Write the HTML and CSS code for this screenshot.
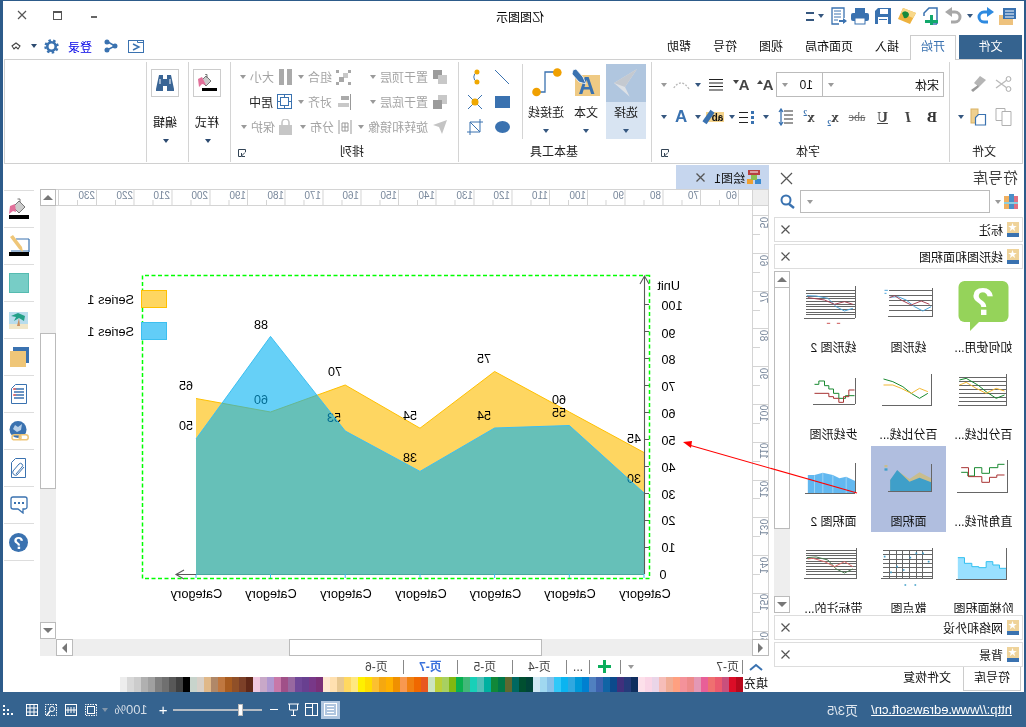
FILE: index.html
```html
<!DOCTYPE html>
<html lang="zh">
<head>
<meta charset="utf-8">
<title>亿图图示</title>
<link rel="stylesheet" href="styles.css">
</head>
<body>
<div class="app">
  <header class="titlebar">
    <div class="qa">
      <svg width="20" height="20" viewBox="0 0 20 20"><rect x="4" y="9" width="14" height="10" fill="#eec27d"/><rect x="1" y="2" width="13" height="11" fill="#3a72b0"/><path d="M3 5h9M3 8h9M3 11h9" stroke="#fff"/></svg>
      <svg width="20" height="20" viewBox="0 0 20 20"><path d="M8 6h4a5 5 0 0 1 0 10H8" fill="none" stroke="#2e8ae0" stroke-width="3"/><path d="M2 6l7-5v10z" fill="#2e8ae0"/></svg>
      <i class="dd"></i>
      <svg width="20" height="20" viewBox="0 0 20 20"><g transform="translate(20,0) scale(-1,1)"><path d="M8 6h4a5 5 0 0 1 0 10H8" fill="none" stroke="#a8a8a8" stroke-width="3"/><path d="M2 6l7-5v10z" fill="#a8a8a8"/></g></svg>
      <svg width="20" height="20" viewBox="0 0 20 20"><path d="M3 18V2h8l5 5v3" fill="none" stroke="#3a72b0" stroke-width="1.500"/><path d="M3 18h5" stroke="#3a72b0" stroke-width="1.500"/><path d="M5 15h5v-5h3v5h5v3h-5v2h-3v-2H5z" fill="#12a86c" transform="translate(-3,-1)"/></svg>
      <svg width="20" height="20" viewBox="0 0 20 20"><path d="M1 7l13-5 5 11-12 5z" fill="#eeb23e"/><path d="M1 7l13-5 2 5-12 5z" fill="#f8d88a"/><path d="M8 8a4 4 0 0 1 7-1l-2 5a4 4 0 0 1-5-4z" fill="#178a3c"/></svg>
      <svg width="20" height="20" viewBox="0 0 20 20"><path d="M2 2h13l3 3v13H2z" fill="#3a72b0"/><rect x="5" y="3" width="8" height="5" fill="#fff"/><rect x="5" y="11" width="10" height="7" fill="#fff"/><rect x="6" y="13" width="8" height="1" fill="#3a72b0"/></svg>
      <svg width="20" height="20" viewBox="0 0 20 20"><rect x="1" y="7" width="18" height="8" rx="2" fill="#3a72b0"/><rect x="5" y="2" width="10" height="5" fill="#3a72b0"/><rect x="5" y="12" width="10" height="6" fill="#fff" stroke="#3a72b0"/></svg>
      <svg width="20" height="20" viewBox="0 0 20 20"><path d="M4 12V2h12v16H9" fill="none" stroke="#3a72b0" stroke-width="1.300"/><path d="M7 5h7M7 8h7M7 11h7M10 14h4" stroke="#3a72b0"/><path d="M1 15l4-3v2h4v2H5v2z" fill="#3a72b0"/></svg>
      <i class="dd"></i>
      <span class="qa-more"></span>
    </div>
    <div class="apptitle">亿图图示</div>
    <div class="win">
      <span class="win-min"></span>
      <span class="win-max"></span>
      <svg width="10" height="10" viewBox="0 0 10 10"><path d="M1 1l8 8M9 1l-8 8" stroke="#555" stroke-width="1.200"/></svg>
    </div>
  </header>

  <nav class="tabsrow">
    <div class="tab tab-file">文件</div>
    <div class="tab tab-active">开始</div>
    <div class="tab">插入</div>
    <div class="tab">页面布局</div>
    <div class="tab">视图</div>
    <div class="tab">符号</div>
    <div class="tab">帮助</div>
    <div class="account">
      <svg width="16" height="14" viewBox="0 0 16 14"><rect x=".5" y="1.500" width="15" height="12" fill="#fff" stroke="#3a72b0"/><path d="M.5 1.500h6v2h-6" fill="none" stroke="#3a72b0"/><path d="M11 5l-6 3 6 3" fill="none" stroke="#3a72b0" stroke-width="1.400"/></svg>
      <svg width="14" height="14" viewBox="0 0 14 14"><path d="M10 3L3 7l8 4" fill="none" stroke="#3a72b0" stroke-width="1.500"/><circle cx="11" cy="3" r="2.500" fill="#3a72b0"/><circle cx="3" cy="7" r="2.500" fill="#3a72b0"/><circle cx="11" cy="11" r="2.500" fill="#3a72b0"/></svg>
      <span class="login">登录</span>
      <svg width="15" height="15" viewBox="0 0 15 15"><circle cx="7.500" cy="7.500" r="4.200" fill="none" stroke="#3a72b0" stroke-width="2.600"/><circle cx="7.500" cy="7.500" r="6" fill="none" stroke="#3a72b0" stroke-width="2.400" stroke-dasharray="2.400 2.300"/></svg>
      <i class="dd dd-dark"></i>
      <svg width="10" height="8" viewBox="0 0 10 8"><path d="M1 4l4-3 4 3-2 3-2-2-2 2z" fill="none" stroke="#444" stroke-width="1.100"/></svg>
    </div>
  </nav>

  <section class="ribbon">
    <div class="group g-file">
      <div class="rows">
        <div class="gr gr-file">
          <svg width="18" height="18" viewBox="0 0 18 18"><circle cx="3.500" cy="4" r="2.400" fill="none" stroke="#aaa"/><circle cx="3.500" cy="14" r="2.400" fill="none" stroke="#aaa"/><path d="M5 5l11 8M5 13l11-8" stroke="#bbb" stroke-width="1.400"/></svg>
          <svg width="18" height="18" viewBox="0 0 18 18"><path d="M1 5l6-4 6 7-5 4z" fill="#b5b5b5"/><path d="M9 10l7 5-2 2-6-5z" fill="#999"/></svg>
          <span></span>
        </div>
        <div class="gr gr-file">
          <svg width="18" height="18" viewBox="0 0 18 18"><path d="M1 3.500h9v14H1zM7 3.500V.5h9v12h-6" fill="none" stroke="#b0b0b0"/></svg>
          <svg width="18" height="18" viewBox="0 0 18 18"><rect x="9" y="1" width="7" height="14" fill="#efd08f" stroke="#d9b264"/><path d="M1.500 6.500h7l3 3v7.500H1.500z" fill="#fff" stroke="#3a72b0" stroke-width="1.200"/></svg>
          <i class="dd"></i>
        </div>
      </div>
      <div class="glabel ml-file">文件</div>
    </div>

    <div class="group g-font">
      <div class="rows">
        <div class="gr gr-font1">
          <div class="combo combo-font"><span>宋体</span><i class="dd dd-grey"></i></div>
          <div class="combo combo-size"><span>10</span><i class="dd dd-grey"></i></div>
          <span class="fa">A<sup class="fa-up"></sup></span>
          <span class="fa">A<sup class="fa-down"></sup></span>
          <svg width="16" height="14" viewBox="0 0 16 14"><path d="M1 1.500h14M1 5h14M1 8.500h14M1 12h14" stroke="#222" stroke-width="1.200"/></svg>
          <i class="dd"></i>
          <svg width="18" height="12" viewBox="0 0 18 12"><path d="M1 10q8-12 16 0" fill="none" stroke="#b8b8b8" stroke-width="1.300" stroke-dasharray="2 1.500"/></svg>
          <i class="dd dd-grey"></i>
        </div>
        <div class="gr gr-font2">
          <b class="fs fs-b">B</b>
          <b class="fs fs-i">I</b>
          <b class="fs fs-u">U</b>
          <span class="fs fs-abc">abc</span>
          <b class="fs">x<sub>2</sub></b>
          <b class="fs">x<sup>2</sup></b>
          <svg width="16" height="18" viewBox="0 0 16 18"><path d="M1 3h9M1 7h9M1 11h9M1 15h9" stroke="#333"/><path d="M13 1v16M11 4l2-3 2 3M11 14l2 3 2-3" fill="none" stroke="#3a72b0" stroke-width="1.300"/></svg>
          <i class="dd"></i>
          <svg width="15" height="14" viewBox="0 0 15 14"><path d="M0 1h3v3H0zM0 6h3v3H0zM0 11h3v3H0z" fill="#3a72b0"/><path d="M6 2.500h9M6 7.500h9M6 12.500h9" stroke="#222"/></svg>
          <i class="dd"></i>
          <span class="hl">ab<span class="hl-pen"></span></span>
          <i class="dd"></i>
          <b class="fs fs-color">A</b>
          <i class="dd"></i>
        </div>
      </div>
      <div class="glabel-row"><div class="glabel ml-font">字体</div><svg class="launcher" width="8" height="8" viewBox="0 0 8 8"><path d="M.5 3V.5h7v7H5M1 3.500l3.500 3.500M1 7.500h3.500V4" fill="none" stroke="#345"/></svg></div>
    </div>

    <div class="group g-tools">
      <div class="tools">
        <div class="big big-sel">
          <div class="big-top"><svg width="40" height="38" viewBox="0 0 40 38"><path d="M9 5l23 14-15.700 13.700L21 23z" fill="#dde1e6"/><path d="M9 5l12 18 11-4z" fill="#c4c9d0"/></svg></div>
          <div class="big-text">选择</div><i class="dd"></i>
        </div>
        <div class="big">
          <div class="big-ic"><svg width="30" height="30" viewBox="0 0 30 30"><rect x="1" y="7" width="25" height="21" fill="#efca84"/><text x="6" y="26" class="ic-a">A</text><path d="M28 2l-3-1-7 8-3 7 7-2 7-8z" fill="#3a72b0" stroke="#fff" stroke-width=".8"/></svg></div>
          <div class="big-text">文本</div><i class="dd"></i>
        </div>
        <div class="big">
          <div class="big-ic"><svg width="32" height="30" viewBox="0 0 32 30"><path d="M26 24h-9V4H5" fill="none" stroke="#3a72b0" stroke-width="1.300"/><circle cx="25.500" cy="24" r="4.300" fill="#f0a000"/><circle cx="4.700" cy="4.500" r="4.300" fill="#f0a000"/></svg></div>
          <div class="big-text">连接线</div><i class="dd"></i>
        </div>
        <div class="vsep"></div>
        <div class="mini">
          <svg width="16" height="16" viewBox="0 0 16 16"><path d="M15 1L1 15" stroke="#3a72b0"/></svg>
          <svg width="14" height="16" viewBox="0 0 14 16"><path d="M5 3a5.500 5.500 0 0 1 0 10" fill="none" stroke="#3a72b0"/><circle cx="5" cy="3" r="2.500" fill="#f0a800"/><circle cx="5" cy="13" r="2.500" fill="#f0a800"/></svg>
          <svg width="15" height="12" viewBox="0 0 15 12"><rect width="15" height="12" fill="#3a72b0"/></svg>
          <svg width="16" height="16" viewBox="0 0 16 16"><path d="M1 1l14 14M15 1L1 15" stroke="#3a72b0"/><circle cx="8" cy="8" r="3.500" fill="#f0a800"/></svg>
          <svg width="15" height="12" viewBox="0 0 15 12"><ellipse cx="7.500" cy="6" rx="7.500" ry="6" fill="#3a72b0"/></svg>
          <svg width="16" height="16" viewBox="0 0 16 16"><path d="M3 0v13h13M0 3h13v13M3 13L13 3" fill="none" stroke="#3a72b0"/></svg>
        </div>
      </div>
      <div class="glabel ml-tools">基本工具</div>
    </div>

    <div class="group g-arrange">
      <div class="arr">
        <div class="it"><svg width="16" height="16" viewBox="0 0 16 16"><rect x="6" y="1" width="9" height="9" fill="#9b9b9b"/><rect x="1" y="6" width="9" height="9" fill="#c8c8c8"/></svg><span>置于顶层</span><i class="dd dd-grey"></i></div>
        <div class="it"><svg width="16" height="16" viewBox="0 0 16 16"><rect x="1" y="1" width="3" height="3" fill="#a8a8a8"/><rect x="13" y="1" width="3" height="3" fill="#a8a8a8"/><rect x="1" y="13" width="3" height="3" fill="#a8a8a8"/><rect x="13" y="13" width="3" height="3" fill="#a8a8a8"/><rect x="4" y="4" width="5" height="5" fill="#c8c8c8"/><rect x="8" y="8" width="5" height="5" fill="#a8a8a8"/></svg><span>组合</span><i class="dd dd-grey"></i></div>
        <div class="it"><svg width="14" height="16" viewBox="0 0 14 16"><rect width="5" height="16" fill="#aaa"/><rect x="8" width="5" height="16" fill="#aaa"/></svg><span>大小</span><i class="dd dd-grey"></i></div>
        <div class="it"><svg width="16" height="16" viewBox="0 0 16 16"><rect x="1" y="1" width="9" height="9" fill="#c8c8c8"/><rect x="6" y="6" width="9" height="9" fill="#9b9b9b"/></svg><span>置于底层</span><i class="dd dd-grey"></i></div>
        <div class="it"><svg width="16" height="16" viewBox="0 0 16 16"><path d="M1.500 0v16" stroke="#999"/><rect x="3" y="2" width="8" height="4" fill="#aaa"/><rect x="3" y="9" width="11" height="4" fill="#c8c8c8"/></svg><span>对齐</span><i class="dd dd-grey"></i></div>
        <div class="it it-on"><svg width="15" height="15" viewBox="0 0 15 15"><rect x=".5" y=".5" width="14" height="14" fill="#fff" stroke="#3a72b0"/><rect x="3.500" y="3.500" width="8" height="8" fill="none" stroke="#3a72b0"/><path d="M7.500 0v3.500M7.500 11.500V15M0 7.500h3.500M11.500 7.500H15" stroke="#3a72b0"/></svg><span>居中</span><i class="dd dd-none"></i></div>
        <div class="it"><svg width="16" height="14" viewBox="0 0 16 14"><path d="M1 0l14 5-6 2-3 7z" fill="#c4c4c4"/></svg><span>旋转和镜像</span><i class="dd dd-grey"></i></div>
        <div class="it"><svg width="14" height="14" viewBox="0 0 14 14"><path d="M1 0v14M13 0v14M4 3h6v8H4zM4 7h6M7 3v8" fill="none" stroke="#999"/></svg><span>分布</span><i class="dd dd-grey"></i></div>
        <div class="it"><svg width="13" height="16" viewBox="0 0 13 16"><rect y="6" width="13" height="10" fill="#c6c6c6"/><path d="M3 6V3.500a3.500 3.500 0 0 1 7 0V6" fill="none" stroke="#c6c6c6" stroke-width="1.600"/></svg><span>保护</span><i class="dd dd-grey"></i></div>
      </div>
      <div class="glabel-row"><div class="glabel ml-arr">排列</div><svg class="launcher launcher-arr" width="8" height="8" viewBox="0 0 8 8"><path d="M.5 3V.5h7v7H5M1 3.500l3.500 3.500M1 7.500h3.500V4" fill="none" stroke="#345"/></svg></div>
    </div>

    <div class="group g-small">
      <div class="boxic"><svg width="22" height="22" viewBox="0 0 22 22"><rect x="1" y="16" width="15" height="3" fill="#000"/><path d="M7 9l5-5 5 5-5 5z" fill="#ccc" stroke="#777"/><path d="M11 6V2.500h1.800" fill="none" stroke="#777"/><path d="M16 5l4 2-1 8-3-3-4 1z" fill="#e2709a"/></svg></div>
      <div class="boxtext">样式</div><i class="dd dd-dark"></i>
    </div>
    <div class="group g-small">
      <div class="boxic"><svg width="18" height="18" viewBox="0 0 18 18"><path d="M3 1h4v4h4V1h4l3 14v2h-7v-5H7v5H0v-2z" fill="#3a6595"/><path d="M4 5v5M14 5v5" stroke="#fff"/></svg></div>
      <div class="boxtext">编辑</div><i class="dd dd-dark"></i>
    </div>
  </section>

  <main class="main">
    <aside class="panel">
      <div class="panel-head"><span class="panel-title">符号库</span><svg width="13" height="13" viewBox="0 0 13 13"><path d="M1 1l11 11M12 1L1 12" stroke="#555" stroke-width="1.200"/></svg></div>
      <div class="panel-search">
        <svg width="14" height="15" viewBox="0 0 14 15"><rect x="0" y="2" width="4" height="13" fill="#e27080"/><rect x="4" y="0" width="5" height="15" fill="#4b90c8"/><rect x="9" y="2" width="5" height="13" fill="#f0b060"/><rect x="0" y="8" width="14" height="2" fill="#8ecfe0"/></svg>
        <i class="dd dd-grey"></i>
        <div class="search-box"><i class="dd dd-grey"></i></div>
        <svg width="15" height="15" viewBox="0 0 15 15"><circle cx="9" cy="6" r="4.500" fill="none" stroke="#3a72b0" stroke-width="2"/><path d="M6 10l-5 4" stroke="#3a72b0" stroke-width="2.400"/></svg>
      </div>
      <div class="acc"><i class="star"></i><span>标注</span><svg class="acc-x" width="9" height="9" viewBox="0 0 9 9"><path d="M.5.5l8 8M8.500.5l-8 8" stroke="#555" stroke-width="1.200"/></svg></div>
      <div class="acc"><i class="star"></i><span>线形图和面积图</span><svg class="acc-x" width="9" height="9" viewBox="0 0 9 9"><path d="M.5.5l8 8M8.500.5l-8 8" stroke="#555" stroke-width="1.200"/></svg></div>
      <div class="symlist">
        <div class="symgrid">
          <div class="cell">
            <svg class="thumb" viewBox="0 0 60 52"><rect x="4.500" y="1" width="50" height="41" rx="6" fill="#95d35a"/><path d="M43 40v11l-11-11z" fill="#95d35a"/><text x="30" y="35" class="q">?</text></svg>
            <div class="cap">如何使用...</div>
          </div>
          <div class="cell">
            <svg class="thumb" viewBox="0 0 60 52"><g transform="translate(168.500,-115) scale(-.3333,.3333)" fill="none" stroke-width="3"><path d="M488 370V456H355M360 378H488M360 393H488M360 408H488M360 423H488M360 438H488" stroke="#666"/><path d="M485 425L460 438L435 425L410 405L385 395L360 397" stroke="#4ba3d8"/><path d="M480 418L455 408L425 420L395 405L375 392L360 398" stroke="#a84455"/><path d="M345 376h10M345 385h6" stroke="#4ba3d8"/></g></svg>
            <div class="cap">线形图</div>
          </div>
          <div class="cell">
            <svg class="thumb" viewBox="0 0 60 52"><g transform="translate(93.500,-115) scale(-.3333,.3333)" fill="none" stroke-width="3"><path d="M258 364V460H105M110 378H258M110 386H258M110 394H258M110 402H258M110 410H258M110 418H258M110 426H258M110 434H258M110 442H258M110 450H258" stroke="#666"/><path d="M250 430L225 438L200 425L175 400L140 393L112 392" stroke="#4ba3d8"/><path d="M250 418L225 410L195 418L165 405L130 400L115 398" stroke="#a84455"/><path d="M172 475h10M202 475h10" stroke="#c55"/></g></svg>
            <div class="cap">线形图 2</div>
          </div>

          <div class="cell">
            <svg class="thumb" viewBox="0 0 60 52"><g transform="translate(243.500,-2) scale(-.3333,.3333)" fill="none" stroke-width="3"><path d="M712 28V122H565M570 38H712M570 50H712M570 62H712M570 74H712M570 86H712M570 98H712M570 110H712" stroke="#666"/><path d="M705 90L680 100L650 80L625 60L590 40L570 45" stroke="#188a30"/><path d="M705 78L680 70L650 85L620 70L590 52L570 60" stroke="#f2b833"/></g></svg>
            <div class="cap">百分比线...</div>
          </div>
          <div class="cell">
            <svg class="thumb" viewBox="0 0 60 52"><g transform="translate(168.500,-2) scale(-.3333,.3333)" fill="none" stroke-width="3"><path d="M485 28V122H337" stroke="#666"/><path d="M475 85L450 100L425 85L400 65L370 50L342 42" stroke="#188a30"/><path d="M475 80L450 70L425 85L395 70L370 60L342 60" stroke="#f2b833"/></g></svg>
            <div class="cap">百分比线...</div>
          </div>
          <div class="cell">
            <svg class="thumb" viewBox="0 0 60 52"><g transform="translate(93.500,-2) scale(-.3333,.3333)" fill="none" stroke-width="3"><path d="M258 38V118H130" stroke="#666"/><path d="M255 92H228V100H208V85H192V72H178V62H165V48H148V58H135" stroke="#188a30"/><path d="M255 75H238V95H222V112H208V100H192V95H178V85H135" stroke="#a83232"/></g></svg>
            <div class="cap">步线形图</div>
          </div>

          <div class="cell">
            <svg class="thumb" viewBox="0 0 60 52"><g transform="translate(243.500,-89) scale(-.3333,.3333)" fill="none" stroke-width="3"><path d="M715 285V382H562" stroke="#666"/><path d="M705 298H685V308H660V325H637V308H615V333H595V322H575" stroke="#188a30"/><path d="M705 330H682V337H660V352H637V335H597V308H575" stroke="#a83232"/></g></svg>
            <div class="cap">直角折线...</div>
          </div>
          <div class="cell cell-sel">
            <svg class="thumb" viewBox="0 0 60 52"><g transform="translate(168.500,-89) scale(-.3333,.3333)" stroke-width="3"><path d="M485 340L450 322L420 342L385 318L362 345V380H485z" fill="#c8bd8e"/><path d="M485 352L450 338L420 350L383 315L362 345V380H485z" fill="#3f9fc9"/><path d="M485 297V380H355" fill="none" stroke="#666"/><rect x="345" y="300" width="9" height="7" fill="#c8bd8e"/><rect x="345" y="310" width="9" height="7" fill="#3f9fc9"/></g></svg>
            <div class="cap">面积图</div>
          </div>
          <div class="cell">
            <svg class="thumb" viewBox="0 0 60 52"><g transform="translate(93.500,-89) scale(-.3333,.3333)" stroke-width="3"><path d="M257 348L230 335L210 340L190 330L160 323L135 330L115 330V385H257z" fill="#62b8f0"/><path d="M230 336V385M190 331V385M160 324V385M135 331V385" stroke="#9dd3f5" fill="none"/><path d="M257 293V385H107" fill="none" stroke="#666"/></g></svg>
            <div class="cap">面积图 2</div>
          </div>

          <div class="cell">
            <svg class="thumb" viewBox="0 0 60 52"><g transform="translate(243.500,-176) scale(-.3333,.3333)" stroke-width="3"><path d="M565 578H585V595H607V605H628V608H650V590H670V600H690V610H712V645H565z" fill="#99e0ff" stroke="none"/><path d="M565 578H585V595H607V605H628V608H650V590H670V600H690V610H712" fill="none" stroke="#30c0f0"/><path d="M712 548V645H560" fill="none" stroke="#666"/></g></svg>
            <div class="cap">阶梯面积图</div>
          </div>
          <div class="cell">
            <svg class="thumb" viewBox="0 0 60 52"><g transform="translate(168.500,-176) scale(-.3333,.3333)" stroke-width="3" fill="none"><path d="M490 548V642H335M340 557H490M340 570H490M340 583H490M340 596H490M340 609H490M340 622H490M340 635H490M360 557V642M380 557V642M400 557V642M420 557V642M440 557V642M460 557V642" stroke="#666"/><path d="M343 575h5M362 622h5M380 605h5M400 615h5M420 578h5M438 565h5M458 565h5M475 590h5M405 660h5M435 660h5" stroke="#3f9fc9" stroke-width="5"/></g></svg>
            <div class="cap">散点图</div>
          </div>
          <div class="cell">
            <svg class="thumb" viewBox="0 0 60 52"><g transform="translate(93.500,-176) scale(-.3333,.3333)" fill="none" stroke-width="3"><path d="M260 548V642H105M110 557H260M110 565H260M110 573H260M110 581H260M110 589H260M110 597H260M110 605H260M110 613H260M110 621H260M110 629H260" stroke="#666"/><path d="M250 612L225 624L200 612L175 585L140 576L112 578" stroke="#4a7a50"/><path d="M250 605L225 590L195 605L165 590L130 580L115 582" stroke="#e06a6a"/></g></svg>
            <div class="cap">带标注的...</div>
          </div>
        </div>
        <div class="vbar">
          <div class="sbtn"><i class="tri-up"></i></div>
          <div class="thumbv"></div>
          <div class="sbtn"><i class="tri-down"></i></div>
        </div>
      </div>
      <div class="acc"><i class="star"></i><span>网络和外设</span><svg class="acc-x" width="9" height="9" viewBox="0 0 9 9"><path d="M.5.5l8 8M8.500.5l-8 8" stroke="#555" stroke-width="1.200"/></svg></div>
      <div class="acc"><i class="star"></i><span>背景</span><svg class="acc-x" width="9" height="9" viewBox="0 0 9 9"><path d="M.5.5l8 8M8.500.5l-8 8" stroke="#555" stroke-width="1.200"/></svg></div>
      <div class="ptabs"><div class="ptab-on">符号库</div><div class="ptab">文件恢复</div></div>
    </aside>

    <div class="center">
      <div class="docrow"><div class="doctab">
        <svg width="14" height="14" viewBox="0 0 14 14"><rect x="1" y="0" width="12" height="5" fill="#b84040"/><path d="M3 2h8" stroke="#fff"/><rect x="0" y="9" width="6" height="5" fill="#3a8ad0"/><rect x="8" y="9" width="6" height="5" fill="#f0a030"/><rect x="4" y="5" width="6" height="5" fill="#8cc050"/></svg>
        <span class="doctext">绘图1</span>
        <svg width="9" height="9" viewBox="0 0 9 9"><path d="M.5.5l8 8M8.500.5l-8 8" stroke="#555" stroke-width="1.300"/></svg>
      </div></div>
      <div class="canvas">
        <div class="corner"></div>
        <svg class="hruler" width="696" height="17" viewBox="274 189 696 17">
          <path d="M274 189.500H970M274 205.500H970" stroke="#d4d4d4" fill="none"/>
          <path d="M287.500 190V206M325.500 190V206M363 190V206M401 190V206M438.500 190V206M476.500 190V206M514 190V206M552 190V206M590 190V206M627.500 190V206M665 190V206M703 190V206M741 190V206M778.500 190V206M816 190V206M854 190V206M892 190V206M929.500 190V206M967.500 190V206" stroke="#d4d4d4"/>
          <path d="M306.500 200V206M344 200V206M382 200V206M420 200V206M457.500 200V206M495 200V206M533 200V206M571 200V206M608.500 200V206M646 200V206M684 200V206M722 200V206M759.500 200V206M797 200V206M835 200V206M873 200V206M910.500 200V206M948.500 200V206" stroke="#d4d4d4"/>
          <g class="rt">
            <text x="289" y="199">60</text><text x="327" y="199">70</text><text x="365" y="199">80</text><text x="402" y="199">90</text><text x="440" y="199">100</text><text x="478" y="199">110</text><text x="516" y="199">120</text><text x="553" y="199">130</text><text x="591" y="199">140</text><text x="629" y="199">150</text><text x="667" y="199">160</text><text x="705" y="199">170</text><text x="742" y="199">180</text><text x="780" y="199">190</text><text x="818" y="199">200</text><text x="856" y="199">210</text><text x="893" y="199">220</text><text x="931" y="199">230</text>
          </g>
        </svg>
        <div class="vscroll">
          <div class="sbtn"><i class="tri-up"></i></div>
          <div class="vthumb"></div>
          <div class="sbtn sbtn-b"><i class="tri-down"></i></div>
        </div>
        <svg class="vruler" width="17" height="433" viewBox="257 206 17 433">
          <path d="M257.500 206V639M273.500 206V639" stroke="#d4d4d4" fill="none"/>
          <path d="M257 215.500H274M257 253.500H274M257 291.500H274M257 328.500H274M257 366.500H274M257 404.500H274M257 442.500H274M257 480.500H274M257 517.500H274M257 555.500H274M257 593.500H274M257 631.500H274" stroke="#d4d4d4"/>
          <path d="M266 234.500H274M266 272.500H274M266 310.500H274M266 347.500H274M266 385.500H274M266 423.500H274M266 461.500H274M266 498.500H274M266 536.500H274M266 574.500H274M266 612.500H274" stroke="#d4d4d4"/>
          <g class="rt">
            <text transform="translate(266,217) rotate(-90)" text-anchor="end">50</text><text transform="translate(266,255) rotate(-90)" text-anchor="end">60</text><text transform="translate(266,292) rotate(-90)" text-anchor="end">70</text><text transform="translate(266,330) rotate(-90)" text-anchor="end">80</text><text transform="translate(266,368) rotate(-90)" text-anchor="end">90</text><text transform="translate(266,405) rotate(-90)" text-anchor="end">100</text><text transform="translate(266,443) rotate(-90)" text-anchor="end">110</text><text transform="translate(266,481) rotate(-90)" text-anchor="end">120</text><text transform="translate(266,519) rotate(-90)" text-anchor="end">130</text><text transform="translate(266,557) rotate(-90)" text-anchor="end">140</text><text transform="translate(266,594) rotate(-90)" text-anchor="end">150</text><text transform="translate(266,632) rotate(-90)" text-anchor="end">160</text>
          </g>
        </svg>
        <svg class="chart" width="696" height="433" viewBox="274 206 696 433">
          <polygon points="382,574 382,452.500 456.700,412 531.400,371.500 606,428.200 680.800,385 755.500,412 830,398.500 830,574" fill="#fed661"/>
          <polyline points="382,452.500 456.700,412 531.400,371.500 606,428.200 680.800,385 755.500,412 830,398.500" fill="none" stroke="#ffc000"/>
          <g class="cl">
            <text x="392" y="442.500">45</text><text x="467" y="403.500">60</text><text x="542" y="362.500">75</text><text x="616" y="419.500">54</text><text x="691" y="376">70</text><text x="765" y="403.500">60</text><text x="840" y="389.500">65</text>
            <text x="392" y="482.500">30</text><text x="467" y="416.500">55</text><text x="542" y="419.500">54</text><text x="616" y="461.500">38</text><text x="692" y="421.500">53</text><text x="765" y="328.500">88</text><text x="840" y="429.500">50</text>
          </g>
          <polygon points="382,493 456.700,425.500 531.400,428 606,471.400 680.800,431 755.500,336.400 830,439 830,574 382,574" fill="#00b0f2" fill-opacity=".6"/>
          <polyline points="382,493 456.700,425.500 531.400,428 606,471.400 680.800,431 755.500,336.400 830,439" fill="none" stroke="#3cbff0"/>
          <path d="M830 574.500H382" stroke="#4aa8a0"/>
          <path d="M382 574V578M456.700 574V578M531.400 574V578M606 574V578M680.800 574V578M755.500 574V578M830 574V578" stroke="#3cbff0"/>
          <path d="M381.500 574V277M377 284L381.500 276L386 284M830 574.500H850M842 570L850 574.500L842 579" fill="none" stroke="#595959" stroke-width="1.100"/>
          <path d="M377 304.500H382M377 331.500H382M377 358.500H382M377 385.500H382M377 412.500H382M377 439.500H382M377 466.500H382M377 493.500H382M377 520.500H382M377 547.500H382" stroke="#595959"/>
          <rect x="376.500" y="275.500" width="507" height="303" fill="none" stroke="#00ff00" stroke-width="1.500" stroke-dasharray="4 2.500"/>
          <rect x="859.500" y="290.500" width="25" height="17" fill="#fed661" stroke="#ffc000"/>
          <rect x="859.500" y="322.500" width="25" height="17" fill="#62cdf7" stroke="#3cbff0"/>
          <g class="ct">
            <text x="892" y="303.500">Series 1</text><text x="892" y="335.500">Series 1</text>
            <text x="346" y="289.500">Unit</text>
          </g>
          <g class="ya">
            <text x="364.500" y="310">100</text><text x="364.500" y="338">90</text><text x="364.500" y="364">80</text><text x="364.500" y="391">70</text><text x="364.500" y="418">60</text><text x="364.500" y="445">50</text><text x="364.500" y="472">40</text><text x="364.500" y="499">30</text><text x="364.500" y="525">20</text><text x="364.500" y="552">10</text><text x="366.500" y="579">0</text>
          </g>
          <g class="xa">
            <text x="381" y="598">Category</text><text x="456" y="598">Category</text><text x="530.500" y="598">Category</text><text x="605" y="598">Category</text><text x="680" y="598">Category</text><text x="755" y="598">Category</text><text x="829.500" y="598">Category</text>
          </g>
        </svg>
        <div class="hscroll">
          <div class="sbtn-h"><i class="tri-left"></i></div>
          <div class="hthumb"></div>
          <div class="sbtn-h sbtn-hr"><i class="tri-right"></i></div>
        </div>
      </div>
      <div class="pages">
        <div class="pg pg-chev"><svg width="14" height="8" viewBox="0 0 14 8"><path d="M1 7l6-5 6 5" fill="none" stroke="#3a72b0" stroke-width="2"/></svg></div>
        <div class="pg pg-cur"><span>页-7</span><i class="dd dd-grey"></i></div>
        <div class="pg pg-plus"><svg width="13" height="13" viewBox="0 0 13 13"><path d="M6.500 0v13M0 6.500h13" stroke="#0cae5c" stroke-width="3"/></svg></div>
        <div class="pg pg-more">...</div>
        <div class="pg">页-4</div>
        <div class="pg">页-5</div>
        <div class="pg pg-act">页-7</div>
        <div class="pg">页-6</div>
      </div>
      <div class="palette">
        <span class="pal-label">填充</span>
        <div class="swatches">
          <i style="background:#b8081c"></i><i style="background:#dc0d27"></i><i style="background:#c9507c"></i><i style="background:#eb5a6e"></i><i style="background:#ef7070"></i><i style="background:#e85f98"></i><i style="background:#e398b5"></i><i style="background:#ed8a8a"></i><i style="background:#f4929a"></i><i style="background:#ffa080"></i><i style="background:#f0ad95"></i><i style="background:#f6bdb8"></i><i style="background:#ead5e8"></i><i style="background:#fad5e6"></i><i style="background:#fde0ea"></i>
          <i style="background:#0f2e5e"></i><i style="background:#253a7a"></i><i style="background:#40307c"></i><i style="background:#0c4a8c"></i><i style="background:#1064a5"></i><i style="background:#3e62ae"></i><i style="background:#5080c0"></i><i style="background:#0080d0"></i><i style="background:#0098d8"></i><i style="background:#30a8e0"></i><i style="background:#0ab4f0"></i><i style="background:#30c8f8"></i><i style="background:#88c0e8"></i><i style="background:#a0d8f0"></i><i style="background:#d0e8f4"></i>
          <i style="background:#004438"></i><i style="background:#004f30"></i><i style="background:#006860"></i><i style="background:#5e6830"></i><i style="background:#007848"></i><i style="background:#118838"></i><i style="background:#00b0a0"></i><i style="background:#50c0b8"></i><i style="background:#18d0b8"></i><i style="background:#40b878"></i><i style="background:#08b050"></i><i style="background:#80b810"></i><i style="background:#a8d060"></i><i style="background:#bcd038"></i><i style="background:#cce4c0"></i>
          <i style="background:#e85820"></i><i style="background:#f06800"></i><i style="background:#f08010"></i><i style="background:#f89850"></i><i style="background:#f09000"></i><i style="background:#ffb000"></i><i style="background:#f5a810"></i><i style="background:#fcc030"></i><i style="background:#ffdc00"></i><i style="background:#fff000"></i><i style="background:#ffe880"></i>
          <i style="background:#ffd860"></i><i style="background:#e8c890"></i><i style="background:#ffe0b0"></i><i style="background:#ffe8d0"></i>
          <i style="background:#7a3078"></i><i style="background:#783888"></i><i style="background:#684090"></i><i style="background:#704898"></i><i style="background:#9868a0"></i><i style="background:#a05088"></i><i style="background:#c878a8"></i><i style="background:#b098d0"></i><i style="background:#c8a8c8"></i><i style="background:#f0c8e0"></i>
          <i style="background:#602818"></i><i style="background:#7c4028"></i><i style="background:#905028"></i><i style="background:#a85c20"></i><i style="background:#c07840"></i><i style="background:#b08868"></i><i style="background:#e0b888"></i><i style="background:#d8d0c8"></i><i style="background:#c8d4cc"></i>
          <i style="background:#000000"></i><i style="background:#404040"></i><i style="background:#585858"></i><i style="background:#707070"></i><i style="background:#808080"></i><i style="background:#a0a0a0"></i><i style="background:#b0b0b0"></i><i style="background:#cccccc"></i><i style="background:#d8d8d8"></i><i style="background:#ededed"></i>
        </div>
      </div>
    </div>

    <aside class="sidetools">
      <div class="st"><svg width="22" height="22" viewBox="0 0 22 22"><rect x="1" y="17" width="20" height="4" fill="#000"/><path d="M5 9l6-6 6 6-6 6z" fill="#ccc" stroke="#777"/><path d="M10 4V1h2.500" fill="none" stroke="#777"/><path d="M15 6l5 2 1 8-4-3-3 1z" fill="#e2709a"/></svg></div>
      <div class="st"><svg width="22" height="22" viewBox="0 0 22 22"><rect x="1" y="17" width="20" height="4" fill="#000"/><path d="M1 4h13M1 4v13M1 16h18" fill="none" stroke="#3a72b0" stroke-width="1.200"/><path d="M21 1l-9 12-4 3 1-5 9-12z" fill="#efc678" transform="translate(-1,1)"/></svg></div>
      <div class="st"><svg width="20" height="20" viewBox="0 0 20 20"><rect x=".5" y=".5" width="19" height="19" fill="#77cdc6" stroke="#55bbb0"/></svg></div>
      <div class="st"><svg width="19" height="17" viewBox="0 0 19 17"><rect width="19" height="17" fill="#b8dcec"/><rect y="12" width="19" height="5" fill="#f0e6c8"/><path d="M9 6l2 8h-3z" fill="#c89060"/><path d="M3 4l7-3 7 3-5 1 2 4-5-3-5 3z" fill="#22a088"/></svg></div>
      <div class="st"><svg width="20" height="20" viewBox="0 0 20 20"><rect width="16" height="16" fill="#3a72b0"/><rect x="3" y="4" width="16" height="16" fill="#efc678"/></svg></div>
      <div class="st"><svg width="16" height="20" viewBox="0 0 16 20"><path d="M.5.5h11l4 4v15H.5z" fill="#fff" stroke="#3a72b0"/><path d="M3 5h10M3 8h10M3 11h10M3 14h10" stroke="#3a72b0" stroke-width="1.600"/><path d="M11 5h3M11 11h3" stroke="#e86a6a" stroke-width="1.600"/></svg></div>
      <div class="st"><svg width="21" height="20" viewBox="0 0 21 20"><circle cx="11" cy="8.500" r="8.500" fill="#3a72b0"/><path d="M7 3l4 3 3-2 2 4-4 3-4-2z" fill="#b8d0e8"/><rect x=".8" y="13.800" width="9" height="5" rx="2.400" fill="#fff" stroke="#efc678" stroke-width="1.500"/><rect x="8" y="13.800" width="9" height="5" rx="2.400" fill="none" stroke="#efc678" stroke-width="1.500"/></svg></div>
      <div class="st"><svg width="15" height="20" viewBox="0 0 15 20"><path d="M.5 19.500V.5h10l4 4v15z" fill="#fff" stroke="#3a72b0"/><path d="M10 17l-6-7a2 2 0 0 1 3-3l6 7a3 3 0 0 1-4 4L2 10" fill="none" stroke="#3a72b0" transform="translate(0,-1)"/></svg></div>
      <div class="st"><svg width="18" height="18" viewBox="0 0 18 18"><path d="M3 1h12a2 2 0 0 1 2 2v8a2 2 0 0 1-2 2h-5l-5 4v-4H3a2 2 0 0 1-2-2V3a2 2 0 0 1 2-2z" fill="#fff" stroke="#3a72b0" stroke-width="1.300"/><path d="M4 7h2M8 7h2M12 7h2" stroke="#3a72b0" stroke-width="2"/></svg></div>
      <div class="st"><svg width="19" height="19" viewBox="0 0 19 19"><circle cx="9.500" cy="9.500" r="9.500" fill="#3a72b0"/><text x="9.500" y="15.500" class="help">?</text></svg></div>
    </aside>
  </main>

  <footer class="status">
    <a class="url">http://www.edrawsoft.cn/</a>
    <span class="pginfo">页3/5</span>
    <div class="stat-r">
      <span class="sel"><svg width="13" height="13" viewBox="0 0 13 13"><rect x=".5" y=".5" width="12" height="12" fill="none" stroke="#fff"/><path d="M3 3.500h7M3 6.500h7M3 9.500h7" stroke="#fff"/></svg></span>
      <svg width="13" height="13" viewBox="0 0 13 13"><rect x=".5" y=".5" width="12" height="12" fill="none" stroke="#fff"/><path d="M5.500.5v12M5.500 4.500h7" stroke="#fff"/></svg>
      <svg width="13" height="13" viewBox="0 0 13 13"><path d="M1 1h11M2.500 1v6h8V1M6.500 7v5M4 12.500h5" fill="none" stroke="#fff"/></svg>
      <span class="minus"></span>
      <div class="slider"><span class="sl-a"></span><span class="sl-t"></span><span class="sl-b"></span></div>
      <span class="plus">+</span>
      <span class="pct">100%</span>
      <i class="dd dd-muted"></i>
      <svg width="12" height="12" viewBox="0 0 12 12"><rect x=".5" y=".5" width="11" height="11" fill="none" stroke="#fff" stroke-dasharray="1.500 1"/><rect x="2.500" y="2.500" width="7" height="7" fill="none" stroke="#fff"/></svg>
      <svg width="12" height="12" viewBox="0 0 12 12"><rect x=".5" y=".5" width="11" height="11" fill="none" stroke="#fff"/><path d="M0 6h12M3 3v6M6 3v6M9 3v6" stroke="#fff"/></svg>
      <svg width="12" height="12" viewBox="0 0 12 12"><rect x=".5" y=".5" width="11" height="11" fill="none" stroke="#fff" stroke-dasharray="1.500 1"/><circle cx="5" cy="5" r="2.500" fill="none" stroke="#fff"/><path d="M7 7l3 4" stroke="#fff" stroke-width="1.500"/></svg>
      <svg width="12" height="12" viewBox="0 0 12 12"><path d="M0 .5h12M0 4h12M0 8h12M0 11.500h12M.5 0v12M4 0v12M8 0v12M11.500 0v12" stroke="#fff"/></svg>
      <span></span>
      <svg width="11" height="11" viewBox="0 0 11 11"><path d="M0 9h2v2H0zM4 9h2v2H4zM8 9h2v2H8zM4 5h2v2H4zM8 5h2v2H8zM8 1h2v2H8z" fill="#fff"/></svg>
    </div>
  </footer>

  <svg class="pointer" width="1026" height="727" viewBox="0 0 1026 727"><path d="M169 493L337 445" stroke="#ff0000" stroke-width="1.100"/><path d="M343 442L334 441L335 448z" fill="#ff0000"/></svg>
</div>
</body>
</html>
```

FILE: styles.css
```css
* { box-sizing: border-box; }
html { overflow: hidden; }
body {
  margin: 0;
  width: 1026px;
  height: 727px;
  transform: scaleX(-1);
  overflow: hidden;
  background: #fff;
  font: 12px "Liberation Sans", "Noto Sans CJK SC", sans-serif;
  color: #111;
}
svg { display: block; flex: none; }
i { display: block; font-style: normal; }

.app {
  position: relative;
  width: 1026px;
  height: 727px;
  display: flex;
  flex-direction: column;
  border-top: 1px solid #2d5b8a;
  border-left: 2px solid #2d5b8a;
  border-right: 3px solid #2d5b8a;
}

.dd { width: 0; height: 0; border-left: 3.5px solid transparent; border-right: 3.5px solid transparent; border-top: 4px solid #35577f; }
.dd-dark { border-top-color: #2c4a70; }
.dd-grey { border-top-color: #9a9a9a; }
.dd-muted { border-top-color: #8296ab; }
.dd-none { border-top-color: transparent; }

/* title bar */
.titlebar { height: 34px; display: flex; flex: none; }
.qa {
  display: grid;
  grid-template-columns: 22px 20px 12px 22px 23px 24px 23px 23px 22px 12px 10px;
  align-items: center;
  justify-items: center;
  margin-left: 6px;
  height: 30px;
}
.qa-more { width: 8px; height: 9px; border-top: 2px solid #35577f; border-bottom: 2px solid #35577f; }
.apptitle { margin-left: 261px; line-height: 34px; color: #000; }
.win {
  margin-left: auto;
  margin-right: 1px;
  display: grid;
  grid-template-columns: 36px 36px 36px;
  justify-items: center;
  align-items: center;
  height: 28px;
}
.win-min { width: 6px; height: 2px; background: #666; margin-top: 4px; }
.win-max { width: 9px; height: 9px; border: 1px solid #555; border-top-width: 2px; }

/* tabs */
.tabsrow { height: 24px; flex: none; display: flex; align-items: stretch; position: relative; z-index: 2; padding-left: 2px; }
.tab { width: 46px; text-align: center; line-height: 24px; color: #111; }
.tab:nth-child(4) { width: 70px; }
.tab-file { width: 63px; background: #35638f; color: #fff; margin-right: 3px; }
.tab-active { border: 1px solid #ccc; border-bottom: 0; background: #fff; height: 25px; color: #3a72b0; line-height: 23px; }
.account {
  margin-left: auto;
  margin-right: 1px;
  display: grid;
  grid-template-columns: 24px 26px 36px 21px 13px 24px;
  justify-items: center;
  align-items: center;
  height: 22px;
}
.login { color: #0000e6; }

/* ribbon */
.ribbon { height: 105px; flex: none; margin: 0 1px; border: 1px solid #d0d0d0; display: flex; align-items: stretch; }
.group { margin: 2px 0 1px; height: 100px; border-right: 1px solid #d4d4d4; display: flex; flex-direction: column; flex: none; }
.g-file { width: 73px; }
.g-font { width: 298px; }
.g-tools { width: 193px; }
.g-arrange { width: 228px; }
.g-small { width: 42px; align-items: flex-start; padding-left: 9px; }
.rows { height: 81px; padding-top: 10px; display: flex; flex-direction: column; gap: 9px; }
.gr { display: grid; height: 24px; align-items: center; justify-items: center; }
.gr-file { grid-template-columns: 24px 26px 8px; margin-left: 7px; }
.gr-font1 { grid-template-columns: 122px 46px 22px 26px 24px 12px 22px 12px; margin-left: 5px; }
.gr-font2 { grid-template-columns: 24px 24px 27px 24px 24px 24px 21px 20px 18px 12px 22px 12px 22px 12px; margin-left: 5px; }
.glabel { line-height: 19px; height: 19px; color: #222; white-space: nowrap; }
.glabel-row { display: flex; align-items: center; height: 19px; }
.launcher { margin-left: auto; margin-right: 9px; }
.launcher-arr { margin-right: 7px; }
.ml-file { margin-left: 26px; }
.ml-font { margin-left: 129px; }
.ml-tools { margin-left: 73px; }
.ml-arr { margin-left: 94px; }

.combo { display: flex; align-items: center; justify-content: space-between; height: 25px; width: 100%; border: 1px solid #bbb; padding: 0 5px 0 4px; }
.combo-size { border-left: 1px; padding-left: 9px; }
.fa { font-size: 15px; font-weight: bold; color: #444; position: relative; }
.fa sup { display: inline-block; width: 0; height: 0; vertical-align: super; border-left: 3px solid transparent; border-right: 3px solid transparent; }
.fa-up { border-bottom: 4px solid #444; }
.fa-down { border-top: 4px solid #444; }
.fs { font: bold 15px "Liberation Serif", serif; color: #444; }
.fs sub, .fs sup { font-size: 8px; line-height: 0; color: #3a72b0; }
.fs-b { color: #333; }
.fs-i { font-style: italic; }
.fs-u { text-decoration: underline; }
.fs-abc { font: 12px "Liberation Serif", serif; text-decoration: line-through; color: #666; }
.fs-color { font: bold 17px "Liberation Sans", sans-serif; color: #3a72b0; }
.hl { display: flex; align-items: center; font: bold 10px "Liberation Sans", sans-serif; background: #f5d38a; height: 10px; padding: 0 0 0 1px; }
.hl-pen { display: block; width: 5px; height: 14px; margin-left: 1px; background: #3a72b0; transform: rotate(-35deg); }

.tools { height: 81px; display: flex; padding: 2px 0 0 5px; }
.big { width: 40px; height: 75px; display: flex; flex-direction: column; align-items: center; }
.big-sel { background: #d8e4f2; }
.big-top { width: 40px; height: 38px; background: #b0c6df; }
.big-ic { height: 38px; display: flex; align-items: center; }
.big-text { height: 20px; line-height: 20px; margin-top: 1px; color: #222; white-space: nowrap; }
.big .dd { margin-top: 6px; }
.vsep { width: 1px; height: 75px; background: #d4d4d4; margin-left: 3px; }
.mini { margin-left: 6px; display: grid; grid-template-columns: 27px 27px; grid-auto-rows: 25px; align-items: center; justify-items: center; height: 75px; }

.arr { height: 81px; padding: 2px 0 0 8px; display: grid; grid-template-columns: 96px 60px 60px; grid-auto-rows: 25px; align-items: center; }
.it { display: flex; align-items: center; color: #a4a4a4; white-space: nowrap; }
.it svg { margin: 0 2px; }
.it span { margin-left: 2px; }
.it .dd { margin-left: 4px; }
.it-on { color: #222; }

.boxic { width: 28px; height: 28px; margin-top: 7px; border: 1px solid #ccc; display: flex; align-items: center; justify-content: center; }
.boxtext { width: 28px; margin-top: 17px; text-align: center; line-height: 18px; color: #111; }
.g-small .dd { margin: 7px 0 0 10px; }

.ic-a { font: bold 23px "Liberation Sans", sans-serif; fill: #3a72b0; }

/* main */
.main { flex: 1; display: flex; min-height: 0; }
.panel { width: 252px; flex: none; display: flex; flex-direction: column; padding-left: 1px; }
.panel-head { height: 26px; display: flex; align-items: center; justify-content: space-between; padding: 2px 8px 0 5px; }
.panel-title { font-size: 15px; color: #444; line-height: 20px; }
.panel-search { height: 23px; display: flex; align-items: center; padding-left: 5px; }
.panel-search .dd { margin-left: 3px; }
.search-box { width: 190px; height: 23px; margin: 0 5px 0 5px; border: 1px solid #bbb; display: flex; align-items: center; justify-content: flex-end; padding-right: 6px; }
.acc { height: 25px; width: 249px; border: 1px solid #ddd; display: flex; align-items: center; padding-left: 3px; margin-top: 2px; flex: none; }
.panel-search + .acc { margin-top: 4px; }
.acc span { margin-left: 4px; }
.acc-x { margin-left: auto; margin-right: 6px; }
.star { width: 12px; height: 15px; background: linear-gradient(#efd39a 0 11px, #3a72b0 11px); position: relative; }
.star::after { content: "★"; color: #fff; font-size: 9px; line-height: 11px; position: absolute; left: 2px; top: 0; }
.symlist { height: 342px; width: 249px; margin-top: 2px; display: flex; flex: none; overflow: hidden; }
.symgrid { width: 227px; margin-left: 2px; padding-top: 1px; display: grid; grid-template-columns: 75px 75px 75px; grid-auto-rows: 87px; }
.cell { padding-top: 8px; height: 87px; }
.cell-sel { background: #b0bedf; height: 86px; }
.thumb { width: 60px; height: 52px; margin: 0 auto; }
.thumb path[stroke="#666"] { shape-rendering: crispEdges; }
.cap { margin-top: 8px; line-height: 16px; text-align: center; white-space: nowrap; color: #111; }
.q { font: bold 38px "Liberation Sans", sans-serif; fill: #fff; text-anchor: middle; }
.help { font: bold 17px "Liberation Sans", sans-serif; fill: #fff; text-anchor: middle; }
.vbar { width: 16px; margin-left: 4px; background: #eee; display: flex; flex-direction: column; }
.thumbv { height: 241px; background: #fff; border: 1px solid #bbb; border-top: 0; }
.vbar .sbtn:last-child { margin-top: auto; }
.sbtn { height: 17px; width: 16px; background: #fff; border: 1px solid #bbb; display: flex; align-items: center; justify-content: center; flex: none; }
.tri-up { border-left: 5px solid transparent; border-right: 5px solid transparent; border-bottom: 5px solid #777; }
.tri-down { border-left: 5px solid transparent; border-right: 5px solid transparent; border-top: 5px solid #777; }
.tri-left { border-top: 5px solid transparent; border-bottom: 5px solid transparent; border-right: 5px solid #777; }
.tri-right { border-top: 5px solid transparent; border-bottom: 5px solid transparent; border-left: 5px solid #777; }
.ptabs { display: flex; height: 24px; padding-left: 2px; }
.ptab-on { width: 58px; height: 24px; border: 1px solid #ccc; border-top: 0; text-align: center; line-height: 23px; }
.ptab { margin-left: 12px; line-height: 23px; }

/* centre */
.center { width: 729px; margin-left: 3px; flex: none; display: flex; flex-direction: column; }
.docrow { height: 25px; padding-top: 1px; }
.doctab { width: 93px; height: 24px; background: #c6d6ee; display: flex; align-items: center; padding-left: 8px; }
.doctext { margin-left: 2px; }
.doctab svg:last-child { margin-left: 9px; }
.canvas { height: 467px; display: grid; grid-template-columns: 17px 696px 16px; grid-template-rows: 17px 433px 17px; flex: none; }
.corner { background: #eee; border: 1px solid #d4d4d4; }
.vscroll { grid-column: 3; grid-row: 1 / 3; background: #eee; display: flex; flex-direction: column; }
.vthumb { height: 156px; margin-top: 127px; background: #fff; border: 1px solid #bbb; flex: none; }
.sbtn-b { margin-top: auto; }
.rt text { font: 10px "Liberation Sans", sans-serif; fill: #78879b; }
.chart { background: #fff; }
.cl text { font: 12.700px "Liberation Sans", sans-serif; fill: #000; text-anchor: middle; }
.ct text, .ya text, .xa text { font: 12.700px "Liberation Sans", sans-serif; fill: #000; }
.ya text { text-anchor: end; }
.xa text { text-anchor: middle; }
.hscroll { grid-column: 1 / -1; background: #eee; display: flex; }
.sbtn-h { width: 17px; height: 17px; background: #fff; border: 1px solid #bbb; display: flex; align-items: center; justify-content: center; flex: none; }
.sbtn-hr { margin-left: 216px; }
.hthumb { width: 253px; height: 17px; margin-left: 210px; background: #fff; border: 1px solid #bbb; flex: none; }

.pages { height: 21px; flex: none; display: grid; grid-template-columns: 26px 122px 31px 23px 54px 55px 54px 54px; align-items: center; }
.pg { height: 14px; line-height: 14px; border-left: 1px solid #888; display: flex; align-items: center; justify-content: center; color: #444; }
.pg-chev { border-left: 0; }
.pg-cur { justify-content: flex-start; padding-left: 3px; }
.pg-cur .dd { margin-left: auto; margin-right: 7px; }
.pg-act { color: #3a72dc; font-weight: bold; }
.palette { height: 15px; flex: none; display: flex; align-items: center; margin-left: 1px; }
.pal-label { width: 25px; line-height: 15px; color: #111; }
.swatches { display: flex; height: 15px; }
.swatches i { width: 7px; height: 15px; }

.sidetools { width: 30px; margin-left: 6px; margin-top: 26px; flex: none; border-top: 1px solid #ddd; align-self: flex-start; }
.st { height: 37px; border-bottom: 1px solid #ddd; display: flex; align-items: center; justify-content: center; }

/* status */
.status { height: 35px; flex: none; margin: 0 -3px 0 -2px; background: #35638f; display: flex; align-items: center; padding-left: 14px; color: #fff; }
.url { font-size: 13px; text-decoration: underline; color: #fff; width: 154px; }
.pginfo { color: #dfe7ef; font-size: 13px; }
.stat-r {
  margin-left: auto;
  margin-right: 2px;
  display: grid;
  grid-template-columns: 19px 18px 19px 20px 91px 20px 44px 8px 20px 20px 19px 19px 9px 12px;
  justify-items: center;
  align-items: center;
}
.sel { width: 19px; height: 18px; background: #b0c6df; display: flex; align-items: center; justify-content: center; }
.minus { width: 8px; height: 1.500px; background: #fff; }
.plus { font-size: 15px; line-height: 15px; }
.pct { color: #d4dde7; font-size: 13px; }
.slider { width: 89px; margin-left: 2px; display: flex; align-items: center; }
.sl-a { width: 19px; height: 2px; background: #b5bcc4; }
.sl-t { width: 5px; height: 12px; background: #fff; border: 1px solid #bbb; }
.sl-b { flex: 1; height: 2px; background: #b5bcc4; }
.pointer { position: absolute; left: -2px; top: -1px; pointer-events: none; z-index: 5; }
```
